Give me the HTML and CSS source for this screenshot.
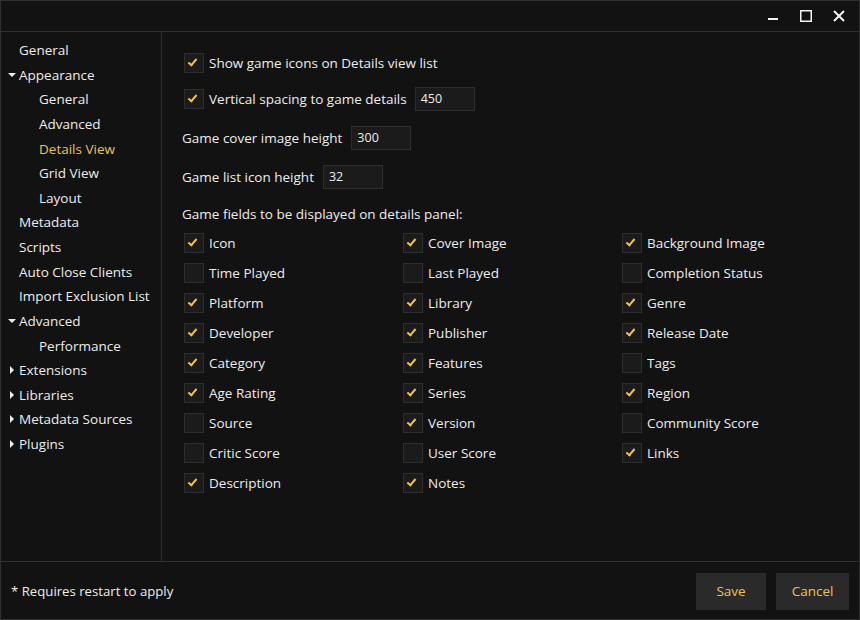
FILE: index.html
```html
<!DOCTYPE html>
<html>
<head>
<meta charset="utf-8">
<link rel="stylesheet" href="styles.css">
</head>
<body>
<div class="window">
  <div class="titlebar">
    <div class="tb-btn"><svg width="12" height="12" viewBox="0 0 12 12"><rect x="1" y="8" width="10" height="2" fill="#f2f2f2"/></svg></div>
    <div class="tb-btn"><svg width="14" height="14" viewBox="0 0 14 14"><rect x="1.75" y="1.75" width="10.5" height="10.5" fill="none" stroke="#f2f2f2" stroke-width="1.5"/></svg></div>
    <div class="tb-btn"><svg width="14" height="14" viewBox="0 0 14 14"><path d="M2 2 L12 12 M12 2 L2 12" stroke="#f2f2f2" stroke-width="2"/></svg></div>
  </div>
  <div class="main">
    <nav class="sidebar">
      <div class="item">General</div>
      <div class="item"><span class="arrow down"></span>Appearance</div>
      <div class="item sub">General</div>
      <div class="item sub">Advanced</div>
      <div class="item sub active">Details View</div>
      <div class="item sub">Grid View</div>
      <div class="item sub">Layout</div>
      <div class="item">Metadata</div>
      <div class="item">Scripts</div>
      <div class="item">Auto Close Clients</div>
      <div class="item">Import Exclusion List</div>
      <div class="item"><span class="arrow down"></span>Advanced</div>
      <div class="item sub">Performance</div>
      <div class="item"><span class="arrow right"></span>Extensions</div>
      <div class="item"><span class="arrow right"></span>Libraries</div>
      <div class="item"><span class="arrow right"></span>Metadata Sources</div>
      <div class="item"><span class="arrow right"></span>Plugins</div>
    </nav>
    <section class="content">
      <div class="row r1"><span class="cb on"></span><span class="lbl">Show game icons on Details view list</span></div>
      <div class="row r2"><span class="cb on"></span><span class="lbl">Vertical spacing to game details</span><span class="input">450</span></div>
      <div class="row r3"><span class="plain">Game cover image height</span><span class="input">300</span></div>
      <div class="row r3"><span class="plain">Game list icon height</span><span class="input">32</span></div>
      <div class="row heading"><span class="plain">Game fields to be displayed on details panel:</span></div>
      <div class="fields">
        <div class="row"><span class="cb on"></span><span class="lbl">Icon</span></div>
        <div class="row"><span class="cb on"></span><span class="lbl">Cover Image</span></div>
        <div class="row"><span class="cb on"></span><span class="lbl">Background Image</span></div>
        <div class="row"><span class="cb"></span><span class="lbl">Time Played</span></div>
        <div class="row"><span class="cb"></span><span class="lbl">Last Played</span></div>
        <div class="row"><span class="cb"></span><span class="lbl">Completion Status</span></div>
        <div class="row"><span class="cb on"></span><span class="lbl">Platform</span></div>
        <div class="row"><span class="cb on"></span><span class="lbl">Library</span></div>
        <div class="row"><span class="cb on"></span><span class="lbl">Genre</span></div>
        <div class="row"><span class="cb on"></span><span class="lbl">Developer</span></div>
        <div class="row"><span class="cb on"></span><span class="lbl">Publisher</span></div>
        <div class="row"><span class="cb on"></span><span class="lbl">Release Date</span></div>
        <div class="row"><span class="cb on"></span><span class="lbl">Category</span></div>
        <div class="row"><span class="cb on"></span><span class="lbl">Features</span></div>
        <div class="row"><span class="cb"></span><span class="lbl">Tags</span></div>
        <div class="row"><span class="cb on"></span><span class="lbl">Age Rating</span></div>
        <div class="row"><span class="cb on"></span><span class="lbl">Series</span></div>
        <div class="row"><span class="cb on"></span><span class="lbl">Region</span></div>
        <div class="row"><span class="cb"></span><span class="lbl">Source</span></div>
        <div class="row"><span class="cb on"></span><span class="lbl">Version</span></div>
        <div class="row"><span class="cb"></span><span class="lbl">Community Score</span></div>
        <div class="row"><span class="cb"></span><span class="lbl">Critic Score</span></div>
        <div class="row"><span class="cb"></span><span class="lbl">User Score</span></div>
        <div class="row"><span class="cb on"></span><span class="lbl">Links</span></div>
        <div class="row"><span class="cb on"></span><span class="lbl">Description</span></div>
        <div class="row"><span class="cb on"></span><span class="lbl">Notes</span></div>
      </div>
    </section>
  </div>
  <div class="footer">
    <span class="note">* Requires restart to apply</span>
    <div class="buttons">
      <span class="btn save">Save</span>
      <span class="btn cancel">Cancel</span>
    </div>
  </div>
</div>
</body>
</html>
```

FILE: styles.css
```css
html, body {
  margin: 0;
  padding: 0;
  background: #121212;
}
body {
  font-family: "Open Sans", "Noto Sans", sans-serif;
  font-size: 13.5px;
  color: #ededed;
}
.window {
  width: 860px;
  height: 620px;
  box-sizing: border-box;
  border: 1px solid #2f2f2f;
  display: flex;
  flex-direction: column;
  background: #121212;
}
.titlebar {
  height: 30px;
  border-bottom: 1px solid #2f2f2f;
  display: flex;
  justify-content: flex-end;
  align-items: center;
  padding-right: 12px;
}
.tb-btn {
  width: 16px;
  height: 16px;
  margin-left: 17px;
  display: flex;
  align-items: center;
  justify-content: center;
}
.main {
  flex: 1;
  display: flex;
  min-height: 0;
}
.sidebar {
  width: 160px;
  border-right: 1px solid #2f2f2f;
  padding-top: 6px;
  box-sizing: content-box;
}
.item {
  height: 24.625px;
  line-height: 24.625px;
  padding-left: 18px;
  position: relative;
  white-space: nowrap;
}
.item.sub {
  padding-left: 38px;
}
.item.active {
  color: #e9c25c;
}
.arrow {
  position: absolute;
  width: 0;
  height: 0;
}
.arrow.down {
  left: 7px;
  top: 10px;
  border-left: 4px solid transparent;
  border-right: 4px solid transparent;
  border-top: 4px solid #ededed;
}
.arrow.right {
  left: 9px;
  top: 8px;
  border-top: 4px solid transparent;
  border-bottom: 4px solid transparent;
  border-left: 4px solid #ededed;
}
.content {
  flex: 1;
  padding: 21px 0 0 22px;
  display: flex;
  flex-direction: column;
  align-items: flex-start;
}
.row {
  display: flex;
  align-items: center;
  height: 20px;
  white-space: nowrap;
}
.r2 {
  height: 24px;
  margin-top: 14px;
}
.r3 {
  height: 24px;
  margin-top: 15px;
  margin-left: -2px;
}
.heading {
  margin-top: 15px;
  margin-left: -2px;
}
.cb {
  width: 18px;
  height: 18px;
  border: 1px solid #2e2e2e;
  background: #1b1b1b;
  flex: none;
  position: relative;
}
.cb.on::after {
  content: "";
  position: absolute;
  left: 5px;
  top: 3px;
  width: 3px;
  height: 7px;
  border-right: 2px solid #f2c24e;
  border-bottom: 2px solid #f2c24e;
  transform: rotate(40deg);
}
.lbl {
  margin-left: 5px;
}
.input {
  margin-left: 8px;
  line-height: 22px;
  border: 1px solid #2e2e2e;
  background: #1b1b1b;
  padding-left: 5px;
  box-sizing: border-box;
  width: 60px;
  height: 24px;
  font-size: 12.5px;
}
.plain {
  margin-right: 1px;
}
.fields {
  margin-top: 9px;
  display: grid;
  grid-template-columns: 219px 219px 219px;
  row-gap: 10px;
}
.footer {
  height: 57px;
  border-top: 1px solid #2f2f2f;
  display: flex;
  align-items: center;
  justify-content: space-between;
  padding: 0 10px 0 10px;
}
.note {
  padding-top: 1px;
  font-size: 13.2px;
}
.buttons {
  display: flex;
  gap: 10px;
  padding-top: 2px;
}
.btn {
  height: 37px;
  line-height: 37px;
  background: #2a2a2a;
  color: #ecc25a;
  text-align: center;
}
.save {
  width: 70px;
}
.cancel {
  width: 73px;
}
```
